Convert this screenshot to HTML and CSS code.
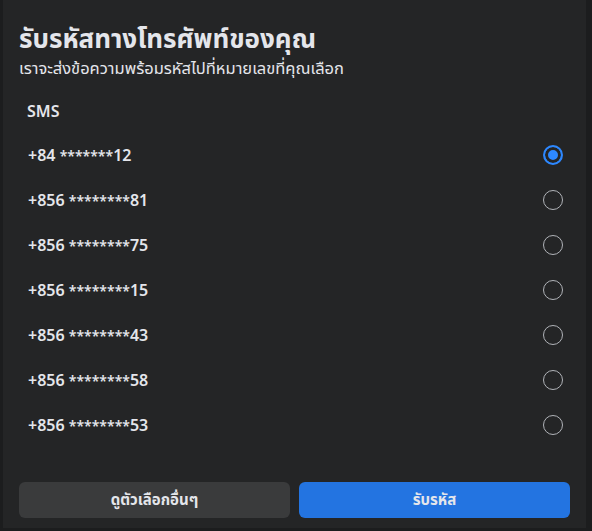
FILE: index.html
```html
<!DOCTYPE html>
<html lang="th">
<head>
      <meta charset="UTF-8">
      <meta name="viewport" content="width=device-width, initial-scale=1.0">
      <title>รับรหัสทางโทรศัพท์ของคุณ</title>
      <link rel="stylesheet" href="styles.css">
</head>
<body>
      <div class="dialogo">
            <h1>รับรหัสทางโทรศัพท์ของคุณ</h1>
            <p class="sub">เราจะส่งข้อความพร้อมรหัสไปที่หมายเลขที่คุณเลือก</p>

            <div class="secao">SMS</div>

            <ul class="lista">
                  <li class="opcao"><span>+84 <span class="mask">*******</span>12</span><span class="radio marcado"></span></li>
                  <li class="opcao"><span>+856 <span class="mask">********</span>81</span><span class="radio"></span></li>
                  <li class="opcao"><span>+856 <span class="mask">********</span>75</span><span class="radio"></span></li>
                  <li class="opcao"><span>+856 <span class="mask">********</span>15</span><span class="radio"></span></li>
                  <li class="opcao"><span>+856 <span class="mask">********</span>43</span><span class="radio"></span></li>
                  <li class="opcao"><span>+856 <span class="mask">********</span>58</span><span class="radio"></span></li>
                  <li class="opcao"><span>+856 <span class="mask">********</span>53</span><span class="radio"></span></li>
            </ul>

            <div class="btns">
                  <button class="btn-cinza">ดูตัวเลือกอื่นๆ</button>
                  <button class="btn-azul">รับรหัส</button>
            </div>
      </div>
</body>
</html>
```

FILE: styles.css
```css
*{
      padding: 0;
      margin: 0;
      box-sizing: border-box;
      font-family: 'Noto Sans', 'Noto Sans Thai', sans-serif;
      color: #e4e6eb;
}

body{
      background-color: #1c1d1e;
      padding-left: 3px;
      height: 531px;
      overflow: hidden;
}

.dialogo{
      width: 583px;
      height: 528px;
      background-color: #242526;
      padding: 22px 16px 0 16px;
}

.dialogo h1{
      font-size: 26px;
      font-weight: 700;
      line-height: 32px;
}

.sub{
      margin-top: 3px;
      font-size: 16.5px;
      line-height: 22px;
}

.secao{
      margin-top: 22px;
      padding-left: 8px;
      font-size: 16px;
      font-weight: 600;
      line-height: 20px;
}

.lista{
      list-style: none;
      margin-top: 11px;
      padding: 0 7px 0 9px;
}

.opcao{
      display: flex;
      align-items: center;
      justify-content: space-between;
      height: 45px;
      font-size: 16px;
      font-weight: 600;
}

.mask{
      font-size: 14px;
}

.radio{
      width: 20px;
      height: 20px;
      border: 1.5px solid #b0b3b8;
      border-radius: 50%;
}

.radio.marcado{
      border: 2px solid #2d88ff;
      background-color: #2d88ff;
      box-shadow: inset 0 0 0 3px #242526;
}

.btns{
      display: flex;
      gap: 9px;
      margin-top: 35px;
}

button{
      flex: 1;
      height: 36px;
      border: none;
      border-radius: 6px;
      font-size: 15px;
      font-weight: 700;
}

.btn-cinza{
      background-color: #3a3b3c;
}

.btn-azul{
      background-color: #2374e1;
}
```
